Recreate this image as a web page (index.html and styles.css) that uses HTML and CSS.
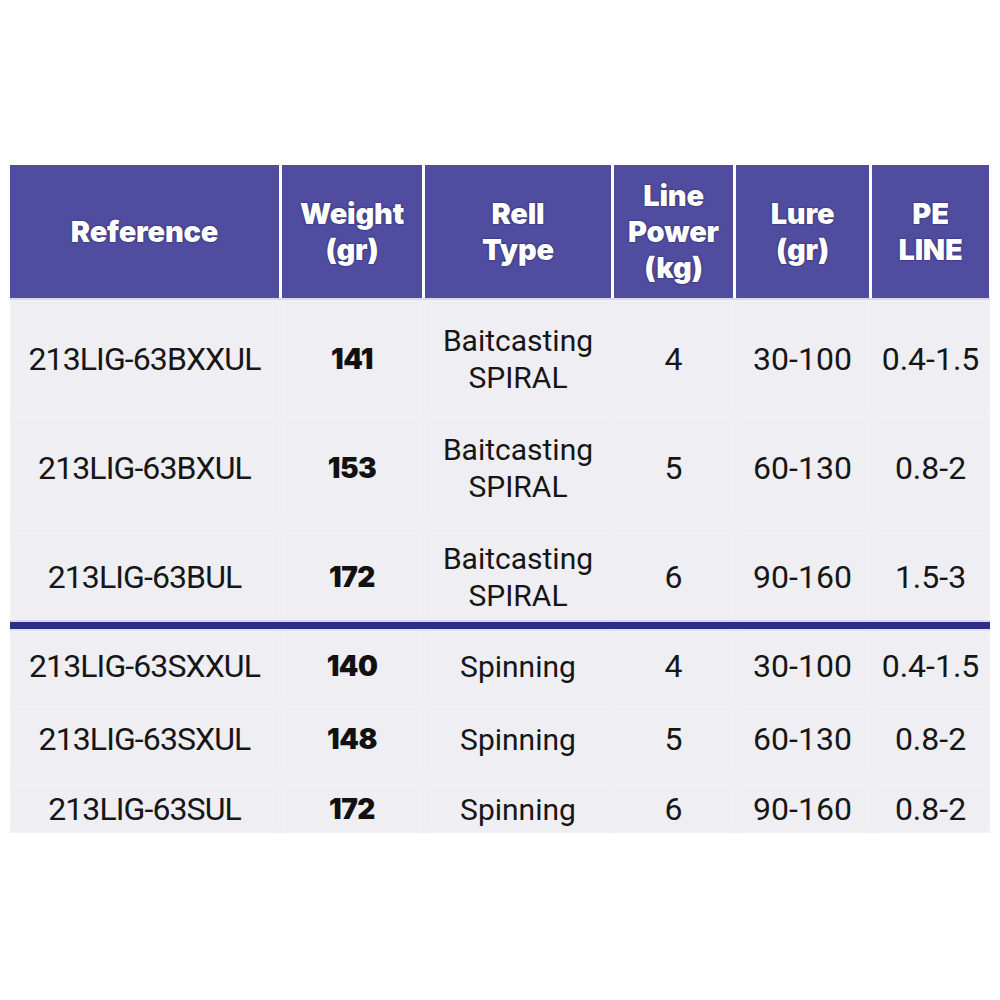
FILE: index.html
```html
<!DOCTYPE html>
<html lang="en">
<head>
<meta charset="utf-8">
<title>213LIG specifications</title>
<link rel="stylesheet" href="styles.css">
</head>
<body>
<div class="spec">
  <div class="row head">
    <div class="cell">Reference</div>
    <div class="cell">Weight<br>(gr)</div>
    <div class="cell">Rell<br>Type</div>
    <div class="cell">Line<br>Power<br>(kg)</div>
    <div class="cell">Lure<br>(gr)</div>
    <div class="cell">PE<br>LINE</div>
  </div>
  <div class="group">
    <div class="row body r1">
      <div class="cell code">213LIG-63BXXUL</div>
      <div class="cell wt">141</div>
      <div class="cell type">Baitcasting<br>SPIRAL</div>
      <div class="cell num">4</div>
      <div class="cell num">30-100</div>
      <div class="cell num">0.4-1.5</div>
    </div>
    <div class="row body r2">
      <div class="cell code">213LIG-63BXUL</div>
      <div class="cell wt">153</div>
      <div class="cell type">Baitcasting<br>SPIRAL</div>
      <div class="cell num">5</div>
      <div class="cell num">60-130</div>
      <div class="cell num">0.8-2</div>
    </div>
    <div class="row body r3">
      <div class="cell code">213LIG-63BUL</div>
      <div class="cell wt">172</div>
      <div class="cell type">Baitcasting<br>SPIRAL</div>
      <div class="cell num">6</div>
      <div class="cell num">90-160</div>
      <div class="cell num">1.5-3</div>
    </div>
  </div>
  <div class="divider"></div>
  <div class="group">
    <div class="row body s1">
      <div class="cell code">213LIG-63SXXUL</div>
      <div class="cell wt">140</div>
      <div class="cell type">Spinning</div>
      <div class="cell num">4</div>
      <div class="cell num">30-100</div>
      <div class="cell num">0.4-1.5</div>
    </div>
    <div class="row body s2">
      <div class="cell code">213LIG-63SXUL</div>
      <div class="cell wt">148</div>
      <div class="cell type">Spinning</div>
      <div class="cell num">5</div>
      <div class="cell num">60-130</div>
      <div class="cell num">0.8-2</div>
    </div>
    <div class="row body s3">
      <div class="cell code">213LIG-63SUL</div>
      <div class="cell wt">172</div>
      <div class="cell type">Spinning</div>
      <div class="cell num">6</div>
      <div class="cell num">90-160</div>
      <div class="cell num">0.8-2</div>
    </div>
  </div>
</div>
</body>
</html>
```
FILE: styles.css
```css
html, body {
  margin: 0;
  padding: 0;
  background: #ffffff;
}

.spec {
  width: 980px;
  margin: 165px 0 0 10px;
}

.row {
  display: grid;
  grid-template-columns: 269px 140px 186px 119px 133px 117px;
  column-gap: 3px;
}

.cell {
  display: flex;
  align-items: center;
  justify-content: center;
  text-align: center;
  white-space: nowrap;
}

/* header */
.head {
  height: 133px;
  border-bottom: 2px solid #d9d8ef;
  background: #ffffff;
}

.head .cell {
  background: #504c9f;
  color: #ffffff;
  font-family: Inter, "Open Sans", sans-serif;
  font-weight: 900;
  font-size: 29px;
  line-height: 36px;
  letter-spacing: -0.2px;
  text-shadow: 0 0 1px #23205c, 0 0 2px #2b286a;
}

/* body */
.group {
  background: #eeeef3;
}

.body {
  color: #161616;
  font-family: Roboto, "Noto Sans", sans-serif;
}

.body .cell {
  box-sizing: border-box;
  border: 1px solid #f3f3f7;
  border-radius: 4px;
}

.code {
  font-size: 32px;
  line-height: 36px;
  letter-spacing: -0.9px;
}

.wt {
  font-family: Inter, sans-serif;
  font-weight: 900;
  font-size: 28px;
  line-height: 36px;
  letter-spacing: -0.5px;
  color: #111111;
}

.type {
  font-size: 30px;
  line-height: 37px;
}

.num {
  font-size: 32px;
  line-height: 36px;
}

.r1 { height: 118px; }
.r2 { height: 109px; padding-bottom: 10px; box-sizing: border-box; }
.r3 { height: 93px; padding-top: 6px; box-sizing: border-box; }

.s1 { height: 75px; padding-bottom: 5px; box-sizing: border-box; }
.s2 { height: 66px; }
.s3 { height: 61px; padding-top: 13px; box-sizing: border-box; }

.divider {
  height: 7px;
  background: #2d2e86;
  border-top: 2px solid #d6d6ee;
  border-bottom: 2px solid #e2e2f0;
}
```
